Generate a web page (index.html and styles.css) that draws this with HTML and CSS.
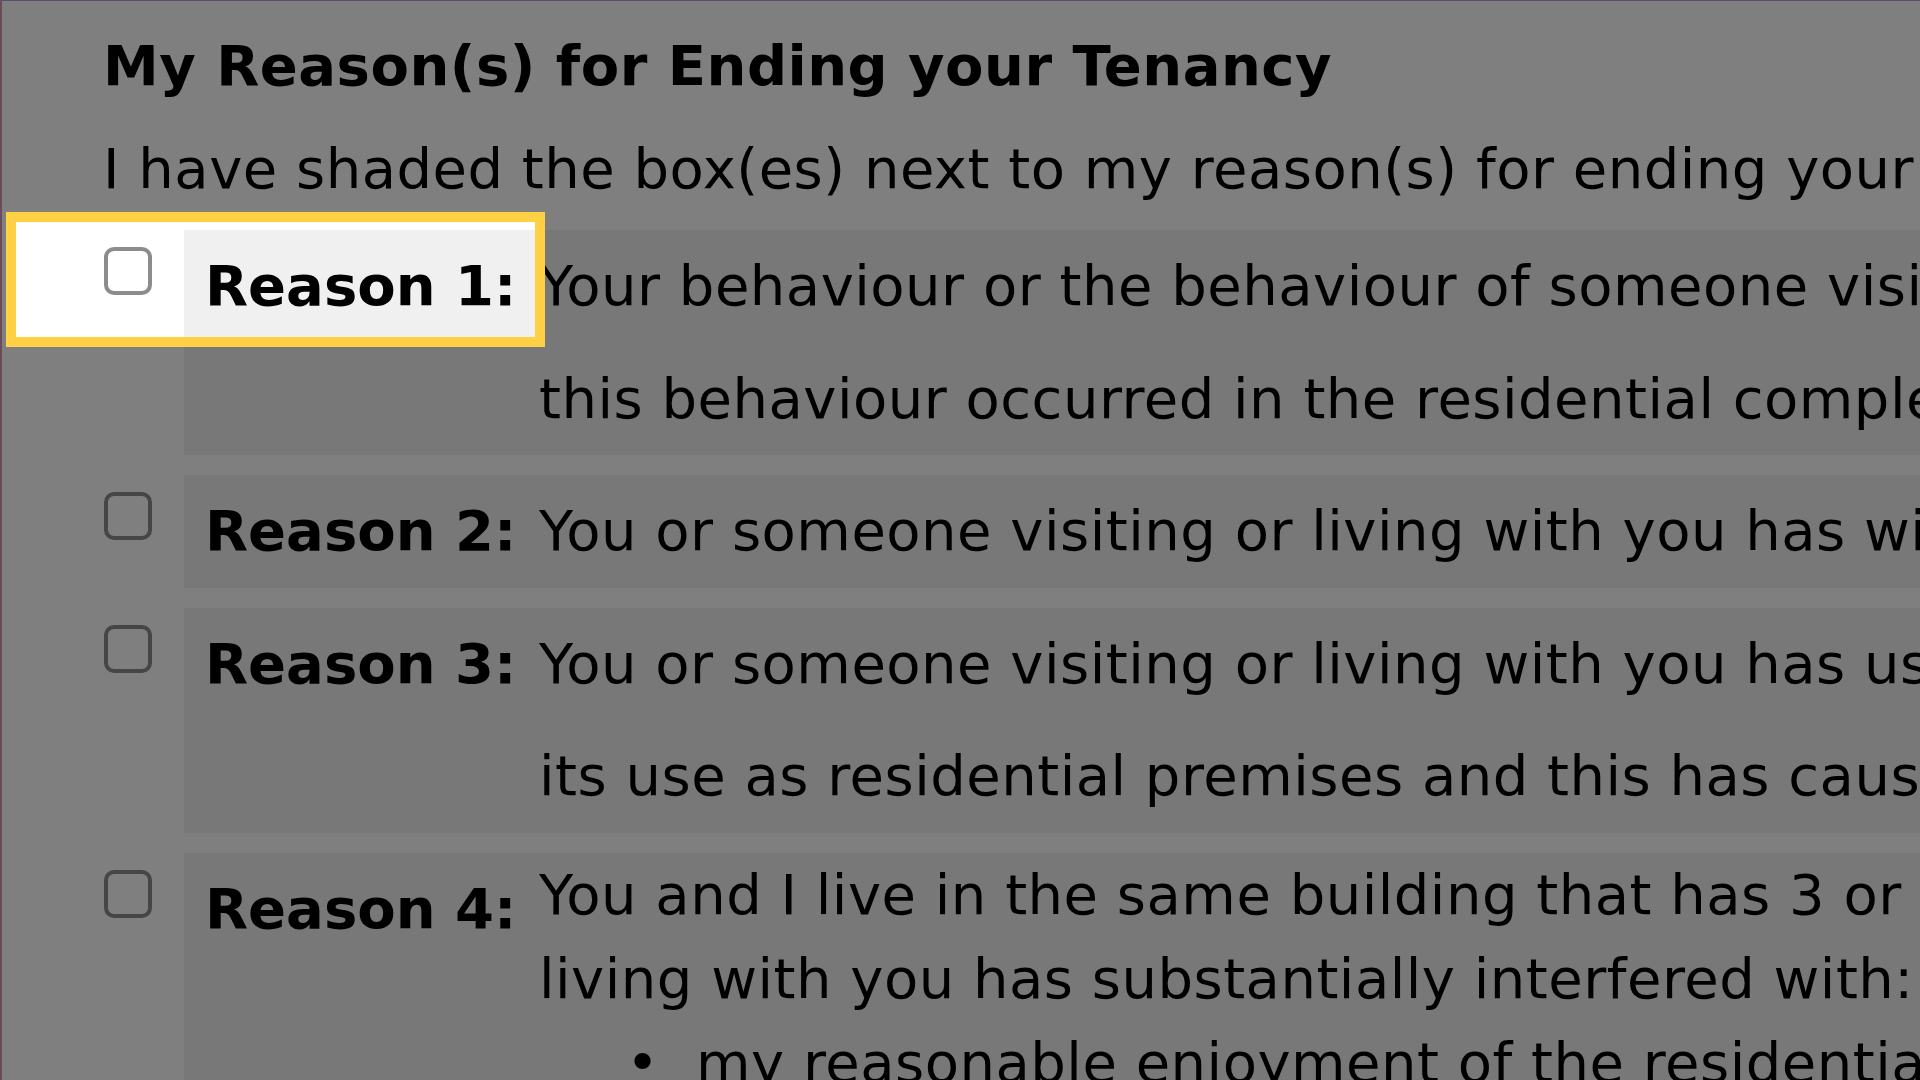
FILE: index.html
```html
<!DOCTYPE html>
<html lang="en">
<head>
<meta charset="utf-8">
<title>My Reason(s) for Ending your Tenancy</title>
<link rel="stylesheet" href="styles.css">
</head>
<body>
<div class="page">
  <h2 class="title">My Reason(s) for Ending your Tenancy</h2>
  <p class="intro">I have shaded the box(es) next to my reason(s) for ending your tenancy.</p>
  <div class="reasons">
    <div class="reason">
      <div class="check"><input type="checkbox" aria-label="Reason 1"></div>
      <div class="label">Reason 1:</div>
      <div class="text">Your behaviour or the behaviour of someone visiting or living with you has seriously impaired the safety of any person and<br>this behaviour occurred in the residential complex.</div>
    </div>
    <div class="reason">
      <div class="check"><input type="checkbox" aria-label="Reason 2"></div>
      <div class="label">Reason 2:</div>
      <div class="text">You or someone visiting or living with you has wilfully caused undue damage to the premises.</div>
    </div>
    <div class="reason">
      <div class="check"><input type="checkbox" aria-label="Reason 3"></div>
      <div class="label">Reason 3:</div>
      <div class="text">You or someone visiting or living with you has used the rental unit or the residential complex in a way that is inconsistent with<br>its use as residential premises and this has caused or can be expected to cause significant damage.</div>
    </div>
    <div class="reason">
      <div class="check"><input type="checkbox" aria-label="Reason 4"></div>
      <div class="label">Reason 4:</div>
      <div class="text compact">You and I live in the same building that has 3 or fewer residential units and you or someone visiting or<br>living with you has substantially interfered with:
        <ul class="bullets">
          <li>my reasonable enjoyment of the residential complex for all usual purposes, or</li>
          <li>another lawful right, privilege or interest that I have.</li>
        </ul>
      </div>
    </div>
  </div>
  <div class="spotlight"></div>
  <div class="frame"></div>
</div>
</body>
</html>
```

FILE: styles.css
```css
html, body {
  margin: 0;
  padding: 0;
  overflow: hidden;
  background: #ffffff;
}

.page {
  position: relative;
  width: 1920px;
  height: 1080px;
  overflow: hidden;
  box-sizing: border-box;
  padding-left: 103px;
  background: #ffffff;
  color: #000000;
  font-family: "DejaVu Sans", Verdana, sans-serif;
  font-size: 56px;
  letter-spacing: 0.5px;
}

.title {
  margin: 24px 0 0;
  font-size: 56px;
  font-weight: bold;
  line-height: 84px;
  white-space: nowrap;
}

.intro {
  margin: 19px 0 0;
  line-height: 84px;
  white-space: nowrap;
}

.reasons {
  display: flex;
  flex-direction: column;
  gap: 20px;
  margin: 19px 0 0 1px;
}

.reason {
  display: grid;
  grid-template-columns: 80px 353px minmax(0, 1fr);
}

.check {
  background: #ffffff;
  padding-top: 17px;
}

.check input {
  appearance: none;
  -webkit-appearance: none;
  display: block;
  box-sizing: border-box;
  width: 48px;
  height: 48px;
  margin: 0;
  border: 4px solid #8c8c8c;
  border-radius: 10px;
  background: #ffffff;
}

.label {
  background: #f0f0f0;
  font-weight: bold;
  letter-spacing: 0;
  line-height: 112.5px;
  padding-left: 21px;
  white-space: nowrap;
}

.text {
  background: #f0f0f0;
  line-height: 112.5px;
  padding-left: 2px;
  white-space: nowrap;
  overflow: hidden;
}

.text.compact {
  line-height: 84px;
}

.bullets {
  margin: 0;
  padding-left: 157px;
  list-style: none;
}

.bullets li::before {
  content: "\2022";
  display: inline-block;
  width: 70px;
  margin-left: -70px;
  letter-spacing: 0;
}

.spotlight {
  position: absolute;
  left: 6px;
  top: 212px;
  width: 539px;
  height: 135px;
  box-sizing: border-box;
  border: 10px solid #ffd043;
  box-shadow: 0 0 0 3000px rgba(0, 0, 0, 0.5);
}

.frame {
  position: absolute;
  inset: 0;
  border-top: 1px solid #5e4c68;
  border-left: 2px solid #6b4a5a;
  pointer-events: none;
}
```
